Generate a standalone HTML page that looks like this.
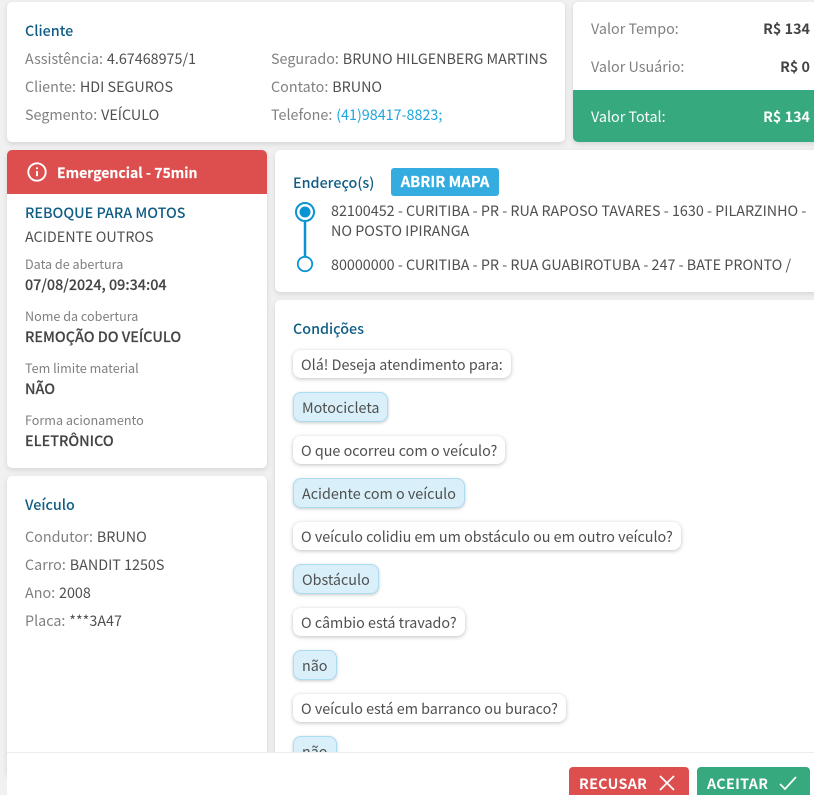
<!DOCTYPE html>
<html lang="pt-BR"><head><meta charset="utf-8"><title>Atendimento</title>
<style>
html,body{margin:0;padding:0;overflow:hidden}
body{width:814px;height:795px;background:#f1f1f1}
#w{position:relative;width:814px;height:795px;overflow:hidden;background:#f1f1f1;font-family:"Noto Sans CJK SC","Liberation Sans",sans-serif;font-size:14.33px;color:#4f4f4f}
.card{position:absolute;background:#fff;border-radius:5px;box-shadow:0 2px 6px rgba(0,0,0,.12)}
.t{position:absolute;white-space:nowrap;line-height:20px;height:20px}
.l{color:#808080;margin-right:.7px}
.h{color:#0f5c85;font-weight:500}
.s{color:#808080;font-size:12.6px}
.b{font-weight:500;color:#444;-webkit-text-stroke:.15px #444}
.v{font-weight:700;color:#444}
.q,.a{position:absolute;left:293px;white-space:nowrap;border-radius:8px;line-height:20px;box-sizing:border-box}
.q{height:28px;padding:5px 8px 3px;background:#fff;box-shadow:0 1px 4px rgba(0,0,0,.25)}
.a{height:30px;padding:5px 8px 3px;background:#d9eff9;border:1px solid #abdcf2;box-shadow:0 1px 3px rgba(0,0,0,.22)}
</style></head><body><div id="w">

<div class="card" style="left:7px;top:2px;width:558px;height:140px"></div>
<div class="t h" style="left:25px;top:21px">Cliente</div>
<div class="t" style="left:25px;top:49px"><span class="l">Assistência:</span> 4.67468975/1</div>
<div class="t" style="left:25px;top:77px"><span class="l">Cliente:</span> HDI SEGUROS</div>
<div class="t" style="left:25px;top:105px"><span class="l">Segmento:</span> VEÍCULO</div>
<div class="t" style="left:271px;top:49px"><span class="l">Segurado:</span> BRUNO HILGENBERG MARTINS</div>
<div class="t" style="left:271px;top:77px"><span class="l">Contato:</span> BRUNO</div>
<div class="t" style="left:271px;top:105px"><span class="l">Telefone:</span> <span style="color:#1ea5de">(41)98417-8823;</span></div>

<div class="card" style="left:573px;top:2px;width:250px;height:140px;overflow:hidden"><div style="position:absolute;left:0;top:88px;width:100%;height:52px;background:#36a97e"></div></div>
<div class="t l" style="left:591px;top:19px">Valor Tempo:</div>
<div class="t v" style="right:4px;top:19px">R$ 134</div>
<div class="t l" style="left:591px;top:57px">Valor Usuário:</div>
<div class="t v" style="right:4px;top:57px">R$ 0</div>
<div class="t" style="left:591px;top:106px;color:#fff;margin-top:1px">Valor Total:</div>
<div class="t" style="right:4px;top:106px;color:#fff;font-weight:700;margin-top:1px">R$ 134</div>

<div class="card" style="left:7px;top:150px;width:260px;height:318px;overflow:hidden"><div style="height:44px;background:#dd4f4f"></div></div>
<svg style="position:absolute;left:27px;top:162px" width="20" height="20" viewBox="0 0 20 20" fill="none" stroke="#fff" stroke-width="1.9"><circle cx="10" cy="10" r="8.700"/><path d="M10 9v5.200"/><path d="M10 5.400v1.800" stroke-width="2"/></svg>
<div class="t" style="left:57px;top:163px;color:#fff;font-weight:700;font-size:14px;-webkit-text-stroke:.15px #fff">Emergencial - 75min</div>
<div class="t h" style="left:25px;top:203px">REBOQUE PARA MOTOS</div>
<div class="t" style="left:25px;top:227px">ACIDENTE OUTROS</div>
<div class="t s" style="left:25px;top:254px">Data de abertura</div>
<div class="t b" style="left:25px;top:275px">07/08/2024, 09:34:04</div>
<div class="t s" style="left:25px;top:306px">Nome da cobertura</div>
<div class="t b" style="left:25px;top:327px">REMOÇÃO DO VEÍCULO</div>
<div class="t s" style="left:25px;top:358px">Tem limite material</div>
<div class="t b" style="left:25px;top:379px">NÃO</div>
<div class="t s" style="left:25px;top:410px">Forma acionamento</div>
<div class="t b" style="left:25px;top:431px">ELETRÔNICO</div>

<div class="card" style="left:7px;top:476px;width:260px;height:300px"></div>
<div class="t h" style="left:25px;top:495px">Veículo</div>
<div class="t" style="left:25px;top:527px"><span class="l">Condutor:</span> BRUNO</div>
<div class="t" style="left:25px;top:555px"><span class="l">Carro:</span> BANDIT 1250S</div>
<div class="t" style="left:25px;top:583px"><span class="l">Ano:</span> 2008</div>
<div class="t" style="left:25px;top:611px"><span class="l">Placa:</span> ***3A47</div>

<div class="card" style="left:275px;top:150px;width:550px;height:142px"></div>
<div class="t h" style="left:293px;top:173px">Endereço(s)</div>
<div class="t" style="left:391px;top:168px;width:108px;height:28px;line-height:28px;background:#35acdf;border-radius:3px;color:#fff;font-weight:700;font-size:14.8px;text-align:center;-webkit-text-stroke:.2px #fff">ABRIR MAPA</div>
<svg style="position:absolute;left:294px;top:200px" width="24" height="74" viewBox="0 0 24 74" fill="none" stroke="#0a94d3"><path d="M11 22V57" stroke-width="2.500"/><circle cx="11" cy="12" r="9" stroke-width="2"/><circle cx="11" cy="12" r="5.500" fill="#0a94d3" stroke="none"/><circle cx="11" cy="64" r="7.200" stroke-width="1.800"/></svg>
<div class="t" style="left:331px;top:201px">82100452 - CURITIBA - PR - RUA RAPOSO TAVARES - 1630 - PILARZINHO -</div>
<div class="t" style="left:331px;top:221px">NO POSTO IPIRANGA</div>
<div class="t" style="left:331px;top:255px">80000000 - CURITIBA - PR - RUA GUABIROTUBA - 247 - BATE PRONTO /</div>

<div class="card" style="left:275px;top:300px;width:550px;height:480px"></div>
<div class="t h" style="left:293px;top:319px">Condições</div>
<div class="q" style="top:350px">Olá! Deseja atendimento para:</div>
<div class="a" style="top:392px">Motocicleta</div>
<div class="q" style="top:436px">O que ocorreu com o veículo?</div>
<div class="a" style="top:478px">Acidente com o veículo</div>
<div class="q" style="top:522px">O veículo colidiu em um obstáculo ou em outro veículo?</div>
<div class="a" style="top:564px">Obstáculo</div>
<div class="q" style="top:608px">O câmbio está travado?</div>
<div class="a" style="top:650px">não</div>
<div class="q" style="top:694px">O veículo está em barranco ou buraco?</div>
<div class="a" style="top:736px">não</div>

<div style="position:absolute;left:7px;top:752px;width:807px;height:43px;background:#fff;border-top:1px solid #ececec;box-sizing:border-box"></div>
<div style="position:absolute;left:569px;top:767px;width:120px;height:40px;background:#dd4f4f;border-radius:4px"></div>
<div class="t" style="left:579px;top:774px;color:#fff;font-weight:700;letter-spacing:.3px">RECUSAR</div>
<svg style="position:absolute;left:659px;top:775px" width="16" height="16" viewBox="0 0 16 16" fill="none" stroke="#fff" stroke-width="1.700"><path d="M1 1L15 15M15 1L1 15"/></svg>
<div style="position:absolute;left:697px;top:767px;width:113px;height:40px;background:#36a97e;border-radius:4px"></div>
<div class="t" style="left:707px;top:774px;color:#fff;font-weight:700;letter-spacing:.3px">ACEITAR</div>
<svg style="position:absolute;left:779px;top:775px" width="18" height="16" viewBox="0 0 18 16" fill="none" stroke="#fff" stroke-width="1.700"><path d="M1 9L6 14L17 2"/></svg>
</div></body></html>
